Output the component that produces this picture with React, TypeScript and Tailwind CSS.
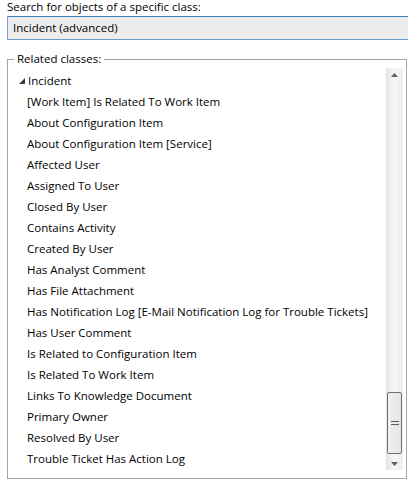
import React from "react";

const items = [
  "[Work Item] Is Related To Work Item",
  "About Configuration Item",
  "About Configuration Item [Service]",
  "Affected User",
  "Assigned To User",
  "Closed By User",
  "Contains Activity",
  "Created By User",
  "Has Analyst Comment",
  "Has File Attachment",
  "Has Notification Log [E-Mail Notification Log for Trouble Tickets]",
  "Has User Comment",
  "Is Related to Configuration Item",
  "Is Related To Work Item",
  "Links To Knowledge Document",
  "Primary Owner",
  "Resolved By User",
  "Trouble Ticket Has Action Log",
];

export default function App() {
  return (
    <div className="w-[408px] h-[490px] bg-white overflow-hidden font-['Open_Sans',sans-serif] text-[11.5px] text-black">
      <div className="pl-[7px] h-[16px] leading-[14px]">Search for objects of a specific class:</div>
      <div className="ml-[7px] h-[24px] border-l border-y border-l-[#7fa6cc] border-t-[#3d7fb6] border-b-[#6d9bc6] bg-[#ececec] pl-[5px] flex items-center">
        Incident (advanced)
      </div>
      <div className="relative ml-[7px] mt-[19px] w-[400px] h-[420px] border border-[#a5a5a5]">
        <span className="absolute left-[6px] -top-[8px] h-[14px] leading-[14px] bg-white px-[3px]">Related classes:</span>
        <div className="flex mt-[8px] h-[402px]">
          <div className="flex-1 pt-[2px]">
            <div className="h-[21px] flex items-center pl-[11px]">
              <svg width="6" height="6" viewBox="0 0 6 6" className="mr-[3px]">
                <polygon points="6,0 6,6 0,6" fill="#3c3c3c" />
              </svg>
              <span>Incident</span>
            </div>
            {items.map((t) => (
              <div key={t} className="h-[21px] flex items-center pl-[19px] whitespace-nowrap">
                {t}
              </div>
            ))}
          </div>
          <div className="w-[17px] mr-[3px] flex flex-col bg-linear-to-r from-[#e4e4e4] via-[#f7f7f7] to-[#ededed]">
            <div className="h-[17px] flex justify-center pt-[5px]">
              <svg width="7" height="4" viewBox="0 0 7 4">
                <polygon points="3.5,0 7,4 0,4" fill="#606060" />
              </svg>
            </div>
            <div className="flex-1 flex flex-col justify-end">
              <div className="mx-[1px] h-[62px] rounded-[2px] border border-[#707070] bg-linear-to-r from-[#f2f2f2] to-[#e4e4e4] flex flex-col items-center justify-center gap-[2px]">
                <div className="w-[8px] h-px bg-[#5a5a5a]" />
                <div className="w-[8px] h-px bg-[#5a5a5a]" />
              </div>
            </div>
            <div className="h-[16px] flex justify-center pt-[8px]">
              <svg width="7" height="4" viewBox="0 0 7 4">
                <polygon points="0,0 7,0 3.5,4" fill="#606060" />
              </svg>
            </div>
          </div>
        </div>
      </div>
    </div>
  );
}
